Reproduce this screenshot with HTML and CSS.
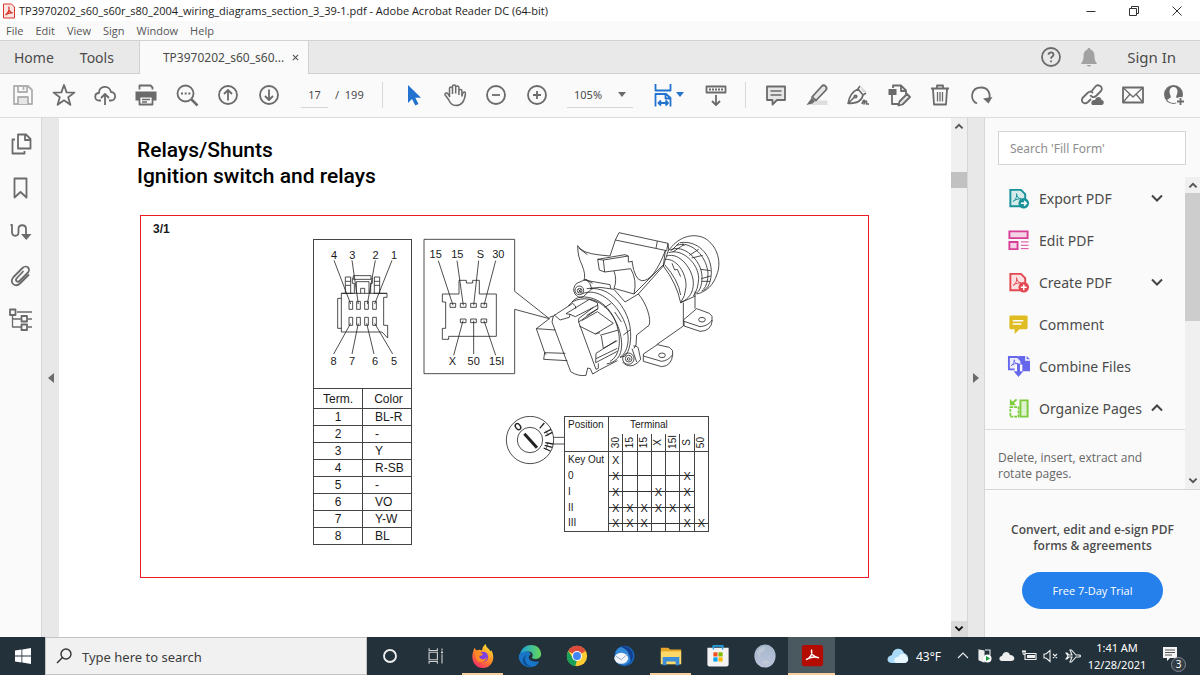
FILE: index.html
```html
<!DOCTYPE html>
<html lang="en">
<head>
<meta charset="utf-8">
<title>TP3970202_s60_s60r_s80_2004_wiring_diagrams_section_3_39-1.pdf - Adobe Acrobat Reader DC (64-bit)</title>
<link rel="stylesheet" href="styles.css">
</head>
<body>
<div class="app">
  <header class="titlebar">
    <svg class="app-icon" viewBox="0 0 14 16"><path d="M1.500 1h8l3 3v11h-11z" fill="#fbe4e2" stroke="#d9352c"/><path d="M3.500 12c3-2 4-5 3.300-8.500C6.500 7 8 9.500 10.800 10c-3-.4-5.500.5-7.300 2z" fill="none" stroke="#d9352c" stroke-width="1.200"/></svg>
    <span class="window-title">TP3970202_s60_s60r_s80_2004_wiring_diagrams_section_3_39-1.pdf - Adobe Acrobat Reader DC (64-bit)</span>
    <div class="window-controls">
      <button aria-label="Minimize"><svg viewBox="0 0 12 12"><path d="M1.500 6.500h9"/></svg></button>
      <button aria-label="Restore"><svg viewBox="0 0 12 12"><path d="M1.500 3.500h7v7h-7zM3.500 3.500v-2h7v7h-2"/></svg></button>
      <button aria-label="Close"><svg viewBox="0 0 12 12"><path d="M1.500 1.500l9 9M10.500 1.500l-9 9"/></svg></button>
    </div>
  </header>
  <nav class="menubar">
    <button>File</button><button>Edit</button><button>View</button><button>Sign</button><button>Window</button><button>Help</button>
  </nav>
  <div class="tabbar">
    <button class="tab">Home</button>
    <button class="tab">Tools</button>
    <div class="tab-active"><span>TP3970202_s60_s60...</span><button aria-label="Close tab"><svg viewBox="0 0 8 8"><path d="M1 1l6 6M7 1L1 7"/></svg></button></div>
    <div class="account">
      <button aria-label="Help"><svg class="ic" viewBox="0 0 24 24"><circle cx="12" cy="12" r="9"/><path d="M9.500 9.800c0-3.300 5-3.200 5 0 0 1.900-2.500 1.700-2.500 4M12 15.500v1.800"/></svg></button>
      <button aria-label="Notifications"><svg class="ic" viewBox="0 0 24 24"><path d="M12 3c1 0 1.500.7 1.500 1.500 3 1 4 3.500 4 6.500 0 4 .8 5.500 2.200 7v1H4.300v-1c1.400-1.500 2.200-3 2.200-7 0-3 1-5.500 4-6.500C10.500 3.700 11 3 12 3zM10 20h4c0 2-4 2-4 0z" fill="#a2a2a2" stroke="none"/></svg></button>
      <button class="sign-in">Sign In</button>
    </div>
  </div>
  <div class="toolbar">
    <div class="group">
      <button aria-label="Save"><svg class="ic pale" viewBox="0 0 24 24"><path d="M3 3h14l4 4v14H3zM7 3v6h9V3M12.500 4v3"/><path d="M7 21v-7h10v7" fill="#e6e6e6"/></svg></button>
      <button aria-label="Star"><svg class="ic" viewBox="0 0 24 24"><path d="M12 2l2.600 7.400 7.800.2-6.200 4.700 2.200 7.500L12 17.300l-6.400 4.500 2.200-7.500L1.600 9.600l7.800-.2z"/></svg></button>
      <button aria-label="Upload"><svg class="ic" viewBox="0 0 24 24"><path d="M8 17.500H6c-5 0-5-7.500 0-7.500 0-8 10.500-8 12-1 5.500 0 5.500 8.500 0 8.500h-2M12 22V11.500M8 15l4-4 4 4"/></svg></button>
      <button aria-label="Print"><svg class="ic" viewBox="0 0 24 24"><path d="M1.500 8.500h21v9h-3.500v-3h-14v3h-3.500z" fill="#6b6b6b" stroke="none"/><path d="M5.500 6.500V2.500h11l2 2v2M5.500 13.500h13v8h-13z" fill="#fafafa"/><path d="M8 16.500h8M8 19h5" stroke-width="1.500"/></svg></button>
      <button aria-label="Search"><svg class="ic" viewBox="0 0 24 24"><circle cx="10.500" cy="10.500" r="8"/><path d="M16.500 16.500l6 6" stroke-width="2.500"/><path d="M6 10.500h2M9.700 10.500h2M13.400 10.500h2"/></svg></button>
      <button aria-label="Previous page"><svg class="ic" viewBox="0 0 24 24"><circle cx="12" cy="12" r="9"/><path d="M12 17.500V7M8 11l4-4 4 4"/></svg></button>
      <button aria-label="Next page"><svg class="ic" viewBox="0 0 24 24"><circle cx="12" cy="12" r="9"/><path d="M12 6.500V17M8 13l4 4 4-4"/></svg></button>
    </div>
    <label class="page-field"><input aria-label="Page number" value="17"><span>/&nbsp; 199</span></label>
    <div class="divider"></div>
    <div class="group">
      <button aria-label="Select"><svg class="ic" viewBox="0 0 24 24"><path d="M6 2v18l4-4 3.300 6.500 3.200-1.500-3.200-6.200H19z" fill="#2273cf" stroke="none"/></svg></button>
      <button aria-label="Hand"><svg class="ic" viewBox="0 0 24 24"><path d="M6.500 14V5.500c0-2 3-2 3 0V11M9.500 10.500v-7c0-2 3.200-2 3.200 0v7M12.700 10.500v-6c0-2 3.200-2 3.200 0V12M15.900 8c0-2 3-2 3 0v5l1-3c.8-1.800 3-1 2.500.8-.7 6-3.200 11.700-9.400 11.700-4 0-6-2.500-7.500-6L2 11.800c-.5-2 2-2.500 3-1l2 3.200" stroke-width="1.500"/></svg></button>
      <button aria-label="Zoom out"><svg class="ic" viewBox="0 0 24 24"><circle cx="12" cy="12" r="9"/><path d="M8 12h8"/></svg></button>
      <button aria-label="Zoom in"><svg class="ic" viewBox="0 0 24 24"><circle cx="12" cy="12" r="9"/><path d="M8 12h8M12 8v8"/></svg></button>
    </div>
    <div class="zoom-field"><select aria-label="Zoom level"><option>105%</option></select><svg class="caret" viewBox="0 0 8 5"><path d="M0 0h8L4 5z"/></svg></div>
    <button class="fit" aria-label="Fit page"><svg class="ic blue" viewBox="0 0 24 24"><path d="M4.500 1v6.500h15V1M4.500 23.500V11H15l4.500 4v8.500M14.500 11v4.500H19M8 20h8.500M10 17.500L7.500 20l2.500 2.500M14.500 17.500L17 20l-2.500 2.500"/></svg><svg class="caret blue-fill" viewBox="0 0 8 5"><path d="M0 0h8L4 5z"/></svg></button>
    <button class="scroll-mode" aria-label="Scrolling"><svg class="ic" viewBox="0 0 24 24"><path d="M2.500 3.500h19v6h-19zM12 12v9.500M8 18l4 4 4-4"/><path d="M5 6.500h14" stroke-dasharray="2 1"/></svg></button>
    <div class="divider"></div>
    <div class="group">
      <button aria-label="Comment"><svg class="ic" viewBox="0 0 24 24"><path d="M3 3.500h18V17h-8l-4.500 4.500V17H3z" fill="#e6e6e6"/><path d="M6.500 8h11M6.500 12h11" stroke-width="1.500"/></svg></button>
      <button aria-label="Highlight"><svg class="ic" viewBox="0 0 24 24"><path d="M9 17.500h13.500V22H4z" fill="#dedede" stroke="none"/><path d="M7 14L17 3c2-2 6 1 4 4L11 17.500z" fill="#e6e6e6"/><path d="M6.500 15l3.500 3-2.500 2.500-6 1.500z" fill="#6b6b6b" stroke="none"/></svg></button>
      <button aria-label="Sign"><svg class="ic" viewBox="0 0 24 24"><path d="M2 20.500C3 14 5.500 9 12 6l5 6c-1 6-6 8.500-15 8.500zM2 20.500l7-7M12 6l2-3M17 12l3-2M16 21c2-6 3-4 2 0 2-5 3-3 2.500 0h2.500" stroke-width="1.600"/><circle cx="9.500" cy="13.500" r="1.200"/><path d="M14 2l7 7h-5z" fill="#ddd" stroke="none"/></svg></button>
      <button aria-label="Edit"><svg class="ic" viewBox="0 0 24 24"><path d="M6 5V2.500h8l5 5V11M14 3v5h5M5 12v9h6"/><path d="M1.500 6h8v6h-8z" fill="#6b6b6b" stroke="none"/><path d="M11.500 22.500l1-4L20 11l3 3-7.500 7.500z" fill="#e6e6e6"/></svg></button>
      <button aria-label="Delete"><svg class="ic" viewBox="0 0 24 24"><path d="M3 5.500h18M9 5V2.500h6V5M5 6l1 15.500h12L19 6"/><path d="M9.500 9v9.500M12 9v9.500M14.500 9v9.500" stroke-width="1.300"/></svg></button>
      <button aria-label="Rotate"><svg class="ic" viewBox="0 0 24 24"><path d="M8 20.500C0 17 2 4.500 12 4.500c7 0 10 6 8 12"/><path d="M23.500 14l-4 6.500-5.500-5z" fill="#6b6b6b" stroke="none"/></svg></button>
    </div>
    <div class="group group-end">
      <button aria-label="Share link"><svg class="ic" viewBox="0 0 24 24"><path d="M11 9l4-5c3-4 9 0 6 4l-5 5c-2 2-5 1-5.500-1M13 10c-2-2-4-1.500-5.500 0l-5 5c-2 4 2 7 5.500 4l3-3"/><path d="M12 22c-2-3 .5-5.500 3-5 1-4 6-4 6.500 0 3 0 3 5 0 5z" fill="#6b6b6b" stroke="none"/></svg></button>
      <button aria-label="Email"><svg class="ic" viewBox="0 0 24 24"><path d="M2 4.500h20v15H2z"/><path d="M2 4.500L12 14 22 4.500M2 19.500L9 11M22 19.500L15 11" stroke-width="1.300"/></svg></button>
      <button aria-label="Add people"><svg class="ic" viewBox="0 0 24 24"><circle cx="11.500" cy="11.500" r="9.500" fill="#6b6b6b" stroke="none"/><path d="M11.500 4c-4 0-5 4.500-3 8.500.5 1 .5 2-.5 2.500l-3 2c3.500 4 9.500 4 13 0l-3-2c-1-.5-1-1.500-.5-2.500 2-4 1-8.500-3-8.500z" fill="#fafafa" stroke="none"/><circle cx="18.500" cy="18.500" r="4.500" fill="#fafafa" stroke="none"/><path d="M18.500 15v7M15 18.500h7"/></svg></button>
    </div>
  </div>

  <main class="workspace">
    <nav class="rail">
      <button aria-label="Page thumbnails"><svg class="ic" viewBox="0 0 24 24"><path d="M9 2.500h8l4.500 4.500v9.500H9zM16 3v5h5M6 7.500H3.500v14h12v-2.500"/></svg></button>
      <button aria-label="Bookmarks"><svg class="ic" viewBox="0 0 24 24"><path d="M5.500 2.500h12v19l-6-5.500-6 5.500z"/></svg></button>
      <button aria-label="Destinations"><svg class="ic" viewBox="0 0 24 24"><path d="M1.500 5h1.500v7c0 5 6.500 5 6.500 0V9c0-5 7.500-5 7.500 0v6"/><path d="M12 14h10.500l-5.200 6z" fill="#6b6b6b" stroke="none"/></svg></button>
      <button aria-label="Attachments"><svg class="ic" viewBox="0 0 24 24"><path d="M14.500 7l-7 7.500c-1.500 2 1 4.500 3 2.500L18.500 9c4-4-1-9-5-5L4.500 13c-5 6 2 11 7 6l8.500-8.500"/></svg></button>
      <button aria-label="Model tree"><svg class="ic" viewBox="0 0 24 24"><path d="M8 4h15M19 11h4M19 19h4M3.500 7v12h9M3.500 11h9" stroke-width="1.300"/><path d="M1 1.500h5.500V7H1zM12.500 8H18v5.500h-5.500zM12.500 16.500H18V22h-5.500z"/></svg></button>
    </nav>
    <button class="gutter gutter-left" aria-label="Show navigation pane"><svg viewBox="0 0 6 10"><path d="M6 0v10L0 5z"/></svg></button>

    <article class="document">
      <h1>Relays/Shunts<br>Ignition switch and relays</h1>
      <section class="figure">
        <h2>3/1</h2>
        <div class="pinout">
          <svg class="drawing connector" viewBox="42 30 291 444">
            <g>
              <path d="M124 190V306M124 190H160M220 190H261V202H251V286H263V324L246 306H124M124 205H113V295H124M136 190V141H152V190M136 154H152M136 166H152M223 190V141H239V190M223 154H239M223 166H239M160 148V137H213V148H160M157 143V160H163V190M217 143V160H212V190M169 190V155H207V190M182 190V175H194V190M124 190H261"/>
              <path d="M147 214h11v24h-11zM170 214h11v24h-11zM194 214h11v24h-11zM218 214h11v24h-11zM147 262h11v24h-11zM170 262h11v24h-11zM194 262h11v24h-11zM218 262h11v24h-11z"/>
              <path d="M102 91L152 222M156 91L175 222M226 91L202 222M276 91L224 222M101 372L152 280M156 372L175 280M222 372L200 280M278 372L224 280"/>
            </g>
            <text x="102" y="86">4</text><text x="157" y="86">3</text><text x="227" y="86">2</text><text x="282" y="86">1</text>
            <text x="101" y="406">8</text><text x="156" y="406">7</text><text x="225" y="406">6</text><text x="282" y="406">5</text>
          </svg>
          <table class="colors">
            <thead><tr><th>Term.</th><th>Color</th></tr></thead>
            <tbody>
              <tr><td>1</td><td>BL-R</td></tr><tr><td>2</td><td>-</td></tr><tr><td>3</td><td>Y</td></tr><tr><td>4</td><td>R-SB</td></tr>
              <tr><td>5</td><td>-</td></tr><tr><td>6</td><td>VO</td></tr><tr><td>7</td><td>Y-W</td></tr><tr><td>8</td><td>BL</td></tr>
            </tbody>
          </table>
        </div>
        <div class="switch">
          <svg class="drawing" viewBox="-261 30 903 450">
            <g>
              <path d="M118 296L14 214V58H-258V461H14V268L118 296"/>
              <g transform="translate(-630 30)">
                <path d="M427 192H477V151H499V159H518V151H538V192H589V319H446V328H427V295H437V216H427Z"/>
                <path d="M450 220h17v12h-17zM481 220h17v12h-17zM512 220h17v12h-17zM543 220h17v12h-17zM481 267h17v11h-17zM512 267h17v11h-17zM543 267h17v11h-17z"/>
                <path d="M415 92L459 226M471 92L490 226M536 92L521 226M587 92L552 226M461 376L489 272M521 372V272M587 376L552 272"/>
              </g>
              <path d="M118 296L79 326L104 398L101 418L172 422M79 326L136 330M104 398L166 400M104 398L108 404M118 292L130 288M130 288L126 306L182 455Q205 470 228 466L233 444L241 446L248 462L268 450M130 288L188 250Q200 258 197 266M132 284L150 300L178 292L180 283L168 281M180 283L196 290L264 255M168 281L238 238L262 248L264 266L206 306V296L250 262M206 306L258 448L265 445V430M208 318L256 342L310 310M215 302L262 275L310 310M230 286L264 266M256 342L270 338M274 348L280 385L322 362M270 346L325 330M258 400L318 362M258 400L257 428L322 394M258 416L322 385M268 450L322 422"/>
              <path d="M175 258C190 235 230 230 262 245C310 270 335 330 335 375C334 410 320 425 290 432M186 246C200 228 225 228 250 236C306 256 330 320 328 370C326 400 315 415 300 424M215 222C260 200 320 245 345 310C365 360 350 400 330 412M240 206C300 200 350 260 360 320C366 360 358 395 345 408M284 262L304 250M314 276L334 306M340 345L360 330M330 412L345 408"/>
              <path d="M230 206L270 202L312 208L345 246L385 222C410 250 425 300 417 316L380 345L378 375L372 385M385 222L460 138Q500 190 512 248M464 134Q505 180 512 225M520 248V318L440 374M555 214V266"/>
              <path d="M248 190L228 178L200 190Q185 205 195 222Q205 236 220 230L248 204M228 178Q242 188 246 208"/><circle cx="208" cy="211" r="13"/><circle cx="209" cy="212" r="7"/><path d="M205 208l8 8M213 207l-7 10"/>
              <circle cx="355" cy="416" r="17"/><circle cx="356" cy="416" r="10"/><circle cx="356" cy="417" r="4"/><path d="M370 378Q385 376 386 390L392 418Q385 430 370 436Q350 442 338 426M366 386L380 426"/>
              <path d="M400 402L442 374L478 382Q492 390 488 404Q475 422 455 424L400 408ZM400 408V424L455 440Q485 438 488 404"/><ellipse cx="456" cy="406" rx="10" ry="7"/>
              <path d="M520 300L560 266L598 280Q610 288 606 300Q595 318 570 320L522 304ZM522 304V318L570 334Q604 334 607 300"/><ellipse cx="576" cy="299" rx="10" ry="7"/>
              <path d="M327 38L474 70L470 92L316 60ZM442 63L438 85M316 60L300 108M474 70L476 88L460 138L466 92M366 124Q374 180 395 182Q430 185 466 92"/>
              <path d="M203 77Q203 110 216 135Q228 165 222 180L300 194L302 206M203 77Q215 100 270 105L300 108M206 84L232 104M263 118L268 150L284 156L280 120ZM263 118L345 104L355 108L280 120M284 156L362 146M355 108V126L368 124M312 153Q322 180 312 205L372 222L460 134M362 146Q382 180 372 222"/>
              <path d="M476 92C500 55 545 35 585 55C625 80 635 130 620 165C610 195 590 215 560 222M510 68C560 60 605 100 604 160C602 195 590 210 575 212M516 72C558 76 590 115 594 160Q594 195 580 208M480 90C520 70 575 120 576 170C576 200 568 215 558 220M476 98C516 84 566 130 566 176Q564 210 550 228M470 108C510 95 550 150 550 190C550 215 540 235 512 248M466 118C500 115 530 160 528 200Q526 230 512 248M484 92L508 68M488 96L522 74M538 106L566 88M545 114L578 106M572 148L602 152M576 184L600 184M574 176L602 168M486 130L494 150L502 148L512 170M500 76Q515 70 524 76M512 248L556 228"/>
            </g>
            <g transform="translate(-630 30)">
              <text x="407" y="84">15</text><text x="472" y="84">15</text><text x="541" y="84">S</text><text x="595" y="84">30</text>
              <text x="457" y="405">X</text><text x="521" y="405">50</text><text x="590" y="405">15I</text>
            </g>
          </svg>
          <div class="positions-row">
            <svg class="drawing dial" viewBox="30 33 177 147">
              <g><circle cx="105" cy="105" r="71"/><circle cx="105" cy="105" r="38"/><path d="M176 97H207M174 117H207"/></g>
              <path d="M88 86L126 128" stroke-width="9"/><path d="M134 70L148 54M147 84L168 73M151 93L172 82M151 113L174 117M149 121L172 127M146 129L166 138" stroke-width="4"/><path d="M153 77L159 92M159 111L153 134" stroke-width="2"/>
              <ellipse cx="69" cy="65" rx="7" ry="10" transform="rotate(-38 69 65)" stroke-width="4"/>
            </svg>
            <table class="positions">
              <thead>
                <tr class="head"><th rowspan="2">Position</th><th colspan="7">Terminal</th></tr>
                <tr class="terms"><th><span>30</span></th><th><span>15</span></th><th><span>15</span></th><th><span>X</span></th><th><span>15I</span></th><th><span>S</span></th><th><span>50</span></th></tr>
              </thead>
              <tbody>
                <tr><th>Key Out</th><td>X</td><td></td><td></td><td></td><td></td><td></td><td></td></tr>
                <tr><th>0</th><td class="run">X</td><td class="run"></td><td class="run"></td><td class="run"></td><td class="run"></td><td class="run">X</td><td></td></tr>
                <tr><th>I</th><td class="run">X</td><td class="run"></td><td class="run"></td><td class="run">X</td><td class="run"></td><td class="run">X</td><td></td></tr>
                <tr><th>II</th><td class="run">X</td><td class="run">X</td><td class="run">X</td><td class="run">X</td><td class="run">X</td><td class="run">X</td><td></td></tr>
                <tr><th>III</th><td class="run">X</td><td class="run">X</td><td class="run">X</td><td class="run"></td><td class="run"></td><td class="run">X</td><td class="run">X</td></tr>
              </tbody>
            </table>
          </div>
        </div>
      </section>
    </article>
    <div class="scrollbar doc-scroll">
      <svg class="chev" viewBox="0 0 10 10"><path d="M2 7l3-3 3 3"/></svg>
      <div class="thumb"></div>
      <svg class="chev chev-dark" viewBox="0 0 10 10"><path d="M2 3l3 3 3-3"/></svg>
    </div>
    <button class="gutter gutter-right" aria-label="Hide tools pane"><svg viewBox="0 0 6 10"><path d="M0 0v10l6-5z"/></svg></button>

    <aside class="tools">
      <input class="tool-search" type="search" aria-label="Search tools" placeholder="Search 'Fill Form'">
      <div class="tool-scroll">
        <div class="tool-list">
          <button class="tool"><svg class="ticon" viewBox="0 0 24 24"><path d="M3.500 3h11l4.500 4.500V20H3.500z" fill="#d5eaeb" stroke="#179299" stroke-width="2"/><path d="M6.500 15c3-2 4-5 3.500-8 0 3 2 5 5 5.500-3-.5-6 .5-8.500 2.500z" fill="none" stroke="#179299"/><circle cx="17.500" cy="17" r="5.500" fill="#179299"/><path d="M14.500 17h5.500M17.800 14.500l2.500 2.500-2.500 2.500" fill="none" stroke="#fff" stroke-width="1.500"/></svg><span>Export PDF</span><svg class="chevron" viewBox="0 0 12 12"><path d="M1 3.500l5 5 5-5"/></svg></button>
          <button class="tool"><svg class="ticon" viewBox="0 0 24 24"><path d="M2.500 2.500h19v7h-19zM2.500 13.500h8.500v7.500H2.500z" fill="#f5d3e6" stroke="#d83f96" stroke-width="2"/><path d="M14.500 13.500h8M14.500 17h8M14.500 20.500h8" stroke="#d83f96"/></svg><span>Edit PDF</span></button>
          <button class="tool"><svg class="ticon" viewBox="0 0 24 24"><path d="M3.500 3h11l4.500 4.500V20H3.500z" fill="#fbdfe1" stroke="#e34850" stroke-width="2"/><path d="M6.500 15c3-2 4-5 3.500-8 0 3 2 5 5 5.500-3-.5-6 .5-8.500 2.500z" fill="none" stroke="#e34850"/><circle cx="17.500" cy="17" r="5.500" fill="#e34850"/><path d="M14.500 17h6M17.500 14v6" fill="none" stroke="#fff" stroke-width="1.500"/></svg><span>Create PDF</span><svg class="chevron" viewBox="0 0 12 12"><path d="M1 3.500l5 5 5-5"/></svg></button>
          <button class="tool"><svg class="ticon" viewBox="0 0 24 24"><path d="M4 2.500h16q1.500 0 1.500 1.500v11.500q0 1.500-1.500 1.500h-7l-5 5v-5H4q-1.500 0-1.500-1.500V4q0-1.500 1.500-1.500z" fill="#dfbd22"/><path d="M6 8h11M6 11.500h9" stroke="#fff" stroke-width="1.500"/></svg><span>Comment</span></button>
          <button class="tool"><svg class="ticon" viewBox="0 0 24 24"><path d="M12 1h7v5h5v11H12z" fill="#6767ec"/><path d="M20.500 1l3.500 3.500h-3.500z" fill="#6767ec"/><path d="M2 2h9l4 4v9H2z" fill="#ececfd" stroke="#6767ec" stroke-width="2"/><path d="M4.500 11c3-2 3-4 3-6 0 3 2 4 4 4-3 0-5 .5-7 2z" fill="none" stroke="#6767ec"/><path d="M8 10h8v8H8z" fill="#fafafa"/><path d="M12 9v9" stroke="#6767ec" stroke-width="3"/><path d="M7 17h10l-5 6z" fill="#6767ec"/></svg><span>Combine Files</span></button>
          <button class="tool"><svg class="ticon" viewBox="0 0 24 24"><path d="M14 3.500h7.500v17H14z" fill="#dff2cf" stroke="#7bcb3a" stroke-width="2"/><path d="M3.500 10.500H12v10H3.500z" fill="none" stroke="#7bcb3a" stroke-width="1.800" stroke-dasharray="3 1"/><path d="M10 2.500L6 6" stroke="#7bcb3a" stroke-width="2"/><path d="M3 2v6.500h6.500z" fill="#7bcb3a"/></svg><span>Organize Pages</span><svg class="chevron" viewBox="0 0 12 12"><path d="M1 8.500l5-5 5 5"/></svg></button>
          <p class="tool-note">Delete, insert, extract and rotate pages.</p>
        </div>
        <div class="scrollbar tool-bar">
          <svg class="chev" viewBox="0 0 10 10"><path d="M2 7l3-3 3 3"/></svg>
          <div class="thumb"></div>
          <svg class="chev" viewBox="0 0 10 10"><path d="M2 3l3 3 3-3"/></svg>
        </div>
      </div>
      <div class="promo">
        <p>Convert, edit and e-sign PDF forms &amp; agreements</p>
        <button>Free 7-Day Trial</button>
      </div>
    </aside>
  </main>

  <footer class="taskbar">
    <button class="start" aria-label="Start"><svg viewBox="0 0 16 16"><path d="M0 2.500L6.500 1.600v6H0zM7.300 1.500L16 0v7.600H7.300zM0 8.400h6.500v6L0 13.500zM7.300 8.400H16V16l-8.700-1.500z" fill="#fff"/></svg></button>
    <label class="search"><svg viewBox="0 0 16 16"><circle cx="10" cy="6" r="5"/><path d="M6.500 9.500L1 15"/></svg><input placeholder="Type here to search" aria-label="Type here to search"></label>
    <div class="task-icons">
      <button aria-label="Cortana"><svg viewBox="0 0 26 26"><circle cx="13" cy="13" r="6.500" fill="none" stroke="#eee" stroke-width="2"/></svg></button>
      <button aria-label="Task view"><svg viewBox="0 0 26 26"><path d="M5.500 9h9v8h-9zM5.500 4.500v2.500h9V4.500M5.500 21.500V19h9v2.500M19.500 5v2M19.500 11v10" fill="none" stroke="#ccc" stroke-width="1.200"/><path d="M18.500 8h2v2h-2z" fill="#eee"/></svg></button>
      <button class="open" aria-label="Firefox"><svg viewBox="0 0 26 26"><defs><linearGradient id="fx" x1=".8" y1="0" x2=".2" y2="1"><stop offset="0" stop-color="#ffe83a"/><stop offset=".5" stop-color="#ff8b26"/><stop offset="1" stop-color="#f4236c"/></linearGradient></defs><path d="M1.500 14C1.500 9 3 7 3.500 4L6 7c2-1 4-1 6 0 0-2 1-5 4-7 0 4 4 5 5 8 1-1 1-1 .5-2 6 9 1 20-8.500 20C5.500 26 1.500 20 1.500 14z" fill="url(#fx)"/><circle cx="13" cy="14" r="5.500" fill="#7b3fe4"/><path d="M5 9c3-2 6 0 8 2-1 2-3 2-4 2 0 4 6 5 8 1 0 7-12 8-12-1z" fill="#ff8a25"/></svg></button>
      <button aria-label="Edge"><svg viewBox="0 0 26 26"><defs><linearGradient id="ed" x2="1" y2="0"><stop offset="0" stop-color="#1b9de2"/><stop offset="1" stop-color="#65d957"/></linearGradient></defs><path d="M2 12C4-3 25-2 25 11c0 6-9 6-10 4 2-3 1-7-4-7-4 0-7 2-9 4z" fill="url(#ed)"/><path d="M1 12c3-5 12-5 13-1-4 2-4 9 9 8-4 7-10 7-15 5-5-2-8-8-7-12z" fill="#1976c8"/><path d="M10 11c-5 5-2 13 7 13-13 2-15-9-7-13z" fill="#0d4f94"/></svg></button>
      <button aria-label="Chrome"><svg viewBox="0 0 26 26"><circle cx="13" cy="13" r="11" fill="#fc3"/><path d="M13 13L3.500 7.500c4.400-7.600 14.700-7.200 19 0z" fill="#dd4b3d"/><path d="M3.500 7.500L9 16l4 2-2 6C2.500 22.500 0 14 3.500 7.500z" fill="#19a05a"/><circle cx="13" cy="13" r="5.500" fill="#fff"/><circle cx="13" cy="13" r="4.300" fill="#4285f4"/></svg></button>
      <button aria-label="Thunderbird"><svg viewBox="0 0 26 26"><circle cx="13.500" cy="13" r="11" fill="#1963b8"/><path d="M4 8C7 2 15 2 18 6l-1 3 3 8c-2 7-13 7-16 1z" fill="#3388d8"/><ellipse cx="10" cy="15.500" rx="7.500" ry="6" fill="#f2f5fa"/><path d="M4 13l6 4 7-6" fill="none" stroke="#8aa9c9"/><path d="M9 3c10-3 18 8 11 17 1-7-2-14-11-17z" fill="#123f8f"/></svg></button>
      <button class="open" aria-label="File Explorer"><svg viewBox="0 0 26 26"><path d="M2 4h8l2 2h12v15H2z" fill="#e7a82a"/><path d="M2 8h22v14H2z" fill="#fed869"/><path d="M4 14h18v9h-4v-4H8v4H4z" fill="#3c8ed9"/></svg></button>
      <button aria-label="Microsoft Store"><svg viewBox="0 0 26 26"><path d="M8 6V2h10v4" fill="none" stroke="#24a5e8" stroke-width="1.500"/><path d="M1.500 4h23v18q0 2.500-2.500 2.500H4Q1.500 24.500 1.500 22z" fill="#f3f3f3"/><path d="M8 2h10v4M8 2v4" fill="none" stroke="#24a5e8" stroke-width="1.500"/><path d="M8 9h4.500v4.500H8z" fill="#f25022"/><path d="M13.500 9H18v4.500h-4.500z" fill="#7fba00"/><path d="M8 14.500h4.500V19H8z" fill="#00a4ef"/><path d="M13.500 14.500H18V19h-4.500z" fill="#ffb900"/></svg></button>
      <button aria-label="Moon"><svg viewBox="0 0 26 26"><defs><linearGradient id="mn" x2="0" y2="1"><stop offset="0" stop-color="#a4b6ca"/><stop offset="1" stop-color="#bdc4dc"/></linearGradient></defs><ellipse cx="13" cy="13" rx="11.500" ry="12.500" fill="url(#mn)"/><path d="M4 9q4-7 10-6l-2 5-4 2-1 5zM9 20l5-3 4 2-3 4z" fill="#cbd3dc" opacity=".5"/></svg></button>
      <button class="open current" aria-label="Acrobat"><svg viewBox="0 0 26 26"><rect x="2" y="1" width="23" height="23" rx="3" fill="#b30b00"/><path d="M6.500 17c5-2 7-6 6-11-1 5 2 8 8 9-6-2-11 0-14 2z" fill="none" stroke="#fff" stroke-width="1.500"/></svg></button>
    </div>
    <div class="tray">
      <svg class="weather" viewBox="0 0 22 18"><path d="M5 16c-6 0-6-7 0-8 1-8 10-8 12-2 6 2 5 10 0 10z" fill="#a9dbf8"/><path d="M9 16c-3-1-2-6 2-6 3-5 8-3 8-1 4 3 2 7-2 7z" fill="#e8f6ff"/></svg>
      <span class="temp">43°F</span>
      <svg class="tray-icon" viewBox="0 0 16 16"><path d="M3 10l5-5 5 5"/></svg>
      <svg class="tray-icon" viewBox="0 0 16 16"><path d="M2 2l5 1v11l-5-2z" fill="#eee"/><path d="M8 2h5v5"/><circle cx="10.500" cy="10.500" r="4" fill="#fff" stroke="none"/><path d="M9 8l4 2.500L9 13z" fill="#169a3a" stroke="none"/></svg>
      <svg class="tray-icon" viewBox="0 0 16 16"><path d="M3 13c-4 0-3-5 0-5 1-5 7-5 8-1 5 0 6 6 1 6z" fill="#eee" stroke="none"/></svg>
      <svg class="tray-icon" viewBox="0 0 16 16"><path d="M4 5.500h11v6H4zM1 3.500h4M2 2v3c0 2 2 2 2 0V2"/><path d="M6 7h8v3H6z" fill="#eee" stroke="none"/></svg>
      <svg class="tray-icon" viewBox="0 0 16 16"><path d="M1 6h2l4-3.500v11L3 10H1zM10 6l4 4M14 6l-4 4"/></svg>
      <svg class="tray-icon" viewBox="0 0 16 16"><path d="M1 5l2 3-2 3h1l2-2h3l-2 5h1.500L11 9h3c2 0 2-2 0-2h-3L6.500 2H5l2 5H4L2 5z"/></svg>
      <div class="clock"><span>1:41 AM</span><span>12/28/2021</span></div>
      <button class="notice" aria-label="Notifications"><svg viewBox="0 0 22 22"><path d="M1 2h14v11H8l-3 3v-3H1z" fill="#f4f4f4"/><path d="M3 5h10M3 7.500h10M3 10h7" stroke="#555"/></svg><span>3</span></button>
    </div>
  </footer>
</div>
</body>
</html>
```

FILE: styles.css
```css
* { box-sizing: border-box; }
body { margin: 0; font-family: "Noto Sans", "Open Sans", sans-serif; color: #4b4b4b; background: #fafafa; }
button { border: 0; padding: 0; margin: 0; background: none; font: inherit; color: inherit; display: flex; align-items: center; justify-content: center; }
input, select { font: inherit; color: inherit; border: 0; border-radius: 0; background: none; padding: 0; margin: 0; min-width: 0; outline: 0; appearance: none; }
svg { display: block; flex: none; }
.app { min-height: 100vh; display: flex; flex-direction: column; }

.ic { width: 24px; height: 24px; fill: none; stroke: #6b6b6b; stroke-width: 1.8; stroke-linejoin: round; }
.ic.pale { stroke: #b0b0b0; }
.ic.blue { stroke: #2273cf; }
.caret { width: 8px; height: 5px; fill: #6b6b6b; }
.caret.blue-fill { fill: #2273cf; }

.titlebar { height: 21px; background: #fff; display: flex; align-items: center; padding-left: 2px; }
.app-icon { width: 14px; height: 16px; }
.window-title { margin-left: 3px; font-family: "Open Sans", sans-serif; font-size: 11px; color: #1c1c1c; white-space: nowrap; }
.window-controls { margin-left: auto; display: flex; padding-right: 2px; }
.window-controls button { width: 43px; height: 21px; }
.window-controls svg { width: 12px; height: 12px; fill: none; stroke: #333; }

.menubar { height: 19px; display: flex; gap: 12px; padding-left: 6px; font-family: "Open Sans", sans-serif; font-size: 11px; color: #555; }

.tabbar { height: 34px; background: #e9e9e9; border-top: 1px solid #d2d2d2; border-bottom: 1px solid #d2d2d2; display: flex; padding-left: 14px; }
.tab { font-size: 14px; margin-right: 26px; }
.tab-active { width: 170px; margin: 0 0 -1px -1px; padding-left: 23px; background: #fafafa; border-left: 1px solid #d2d2d2; border-right: 1px solid #d2d2d2; display: flex; align-items: center; gap: 8px; font-size: 12px; }
.tab-active svg { width: 7px; height: 7px; fill: none; stroke: #555; stroke-width: 1.3; }
.account { margin-left: auto; display: flex; align-items: center; gap: 14px; padding-right: 24px; }
.sign-in { font-size: 15px; margin-left: 12px; }

.toolbar { height: 44px; border-bottom: 1px solid #dcdcdc; display: flex; align-items: center; padding: 0 6px 2px 2px; font-size: 11px; }
.group { display: flex; }
.group button { width: 41px; height: 40px; }
.group-end { margin-left: auto; }
.page-field { display: flex; align-items: center; margin-left: 12px; width: 81px; gap: 7px; }
.page-field input { width: 27px; height: 26px; text-align: center; border-bottom: 1px solid #d6d6d6; }
.divider { width: 1px; height: 26px; background: #d8d8d8; margin-right: 10px; }
.zoom-field { display: flex; align-items: center; width: 66px; height: 26px; margin-left: 10px; padding: 0 7px; border-bottom: 1px solid #d6d6d6; }
.zoom-field select { flex: 1; }
.fit { margin-left: 18px; gap: 1px; }
.scroll-mode { margin: 0 17px 0 20px; }
.scroll-mode + .divider { margin-right: 9px; }

.workspace { flex: 1; display: flex; }
.rail { width: 42px; border-right: 1px solid #d6d6d6; padding-top: 4px; }
.rail button { width: 41px; height: 44px; }
.gutter { background: #e8e8e8; }
.gutter svg { width: 6px; height: 10px; fill: #6b6b6b; }
.gutter-left { width: 17px; }
.gutter-right { width: 18px; border-left: 1px solid #d6d6d6; border-right: 1px solid #d6d6d6; }

.document { flex: 1; background: #fff; padding: 19px 82px 0 81px; color: #1a1a1a; font-family: "Liberation Sans", Arial, sans-serif; }
.document h1 { margin: 0 0 0 -3px; font: 500 21px/26px Roboto, "Liberation Sans", sans-serif; color: #000; }
.figure { margin-top: 26px; min-height: 363px; border: 1px solid #ed1c24; display: flex; padding: 0 0 32px 12px; }
.figure h2 { margin: 6px 0 0; width: 160px; font-size: 12px; line-height: 14px; }
.drawing { fill: none; stroke: #222; stroke-width: 2.4; }
.drawing text { fill: #1a1a1a; stroke: none; font-size: 33px; text-anchor: middle; }
.pinout { margin-top: 23px; width: 99px; }
.connector { width: 99px; height: 149px; border: 1px solid #444; border-bottom: 0; }
table { border-collapse: collapse; table-layout: fixed; }
th { font-weight: 400; padding: 0; }
td { padding: 0; }
.colors { width: 99px; font-size: 12px; line-height: 14px; }
.colors th, .colors td { border: 1px solid #444; height: 17px; text-align: center; }
.colors th { height: 20px; }
.colors th + th { padding-left: 3px; }
.colors tbody td + td { text-align: left; padding-left: 12px; }
.switch { margin: 14px 0 0 11px; }
.switch > .drawing { width: 301px; height: 150px; }
.positions-row { display: flex; margin: 36px 0 0 82px; }
.dial { width: 59px; height: 49px; }
.positions { width: 145px; border: 1px solid #444; font-size: 10px; line-height: 12px; }
.positions thead { border-bottom: 1px solid #444; }
.positions .head th { height: 17px; vertical-align: top; padding-top: 2px; }
.positions .head th:first-child, .positions tbody th { width: 44px; text-align: left; padding-left: 3px; border-right: 1px solid #444; }
.positions .head th:last-child { text-align: left; padding-left: 21px; }
.positions .terms th { height: 18px; border-left: 1px solid #444; }
.terms span { display: block; margin: 0 auto; writing-mode: vertical-rl; transform: rotate(180deg); }
.positions tbody td { height: 16px; font-size: 11px; text-align: center; border-left: 1px solid #444; }
.positions tbody th { white-space: nowrap; }
.positions .run { background: linear-gradient(#333, #333) center / 100% 1px no-repeat; }

.scrollbar { width: 16px; background: #f0f0f0; display: flex; flex-direction: column; }
.chev { width: 16px; height: 16px; padding: 2px; fill: none; stroke: #555; stroke-width: 1.6; }
.chev-dark { margin-top: auto; background: #dadada; stroke: #111; }
.doc-scroll .thumb { margin-top: 38px; height: 16px; background: #c1c1c1; }
.tool-bar .thumb { height: 128px; background: #cdcdcd; margin-bottom: auto; }

.tools { width: 215px; display: flex; flex-direction: column; }
.tool-search { margin: 13px 14px 12px 13px; height: 34px; border: 1px solid #d5d5d5; background: #fff; padding: 0 11px; font-size: 12px; }
.tool-search::placeholder { color: #8e8e8e; opacity: 1; }
.tool-scroll { display: flex; height: 313px; border-bottom: 1px solid #d6d6d6; }
.tool-list { flex: 1; }
.tool { width: 100%; height: 42px; padding: 0 22px; gap: 9px; justify-content: flex-start; font-size: 14px; white-space: nowrap; }
.ticon { width: 23px; height: 23px; }
.chevron { width: 12px; height: 12px; margin-left: auto; fill: none; stroke: #444; stroke-width: 2; }
.tool-note { margin: 0; padding: 20px 30px 0 13px; border-top: 1px solid #dcdcdc; font-family: "Open Sans", sans-serif; font-size: 12px; line-height: 16px; color: #666; }
.promo { padding: 32px 20px 0; text-align: center; font-family: "Open Sans", sans-serif; }
.promo p { margin: 0 0 18px; font-size: 12px; line-height: 16px; font-weight: 600; }
.promo button { width: 141px; height: 37px; margin: 0 auto; border-radius: 19px; background: #2680eb; color: #fff; font-size: 11px; }

.taskbar { height: 38px; background: #22313a; display: flex; color: #fff; }
.start { width: 45px; }
.start svg { width: 16px; height: 16px; }
.search { width: 322px; background: #f1f1f1; border: 1px solid #c4c4c4; display: flex; align-items: center; gap: 10px; padding-left: 10px; color: #333; font-size: 13px; }
.search svg { width: 16px; height: 16px; fill: none; stroke: #333; stroke-width: 1.4; }
.search input { flex: 1; padding-top: 2px; }
.search input::placeholder { color: #3c3c3c; opacity: 1; }
.task-icons { display: flex; }
.task-icons button { width: 47px; padding-top: 2px; border-bottom: 2px solid transparent; }
.task-icons button:first-child { width: 45px; }
.task-icons .open { border-image: linear-gradient(90deg, transparent 10%, #f8cf9c 10%, #f8cf9c 90%, transparent 90%) 2; }
.task-icons .current { background: #4a5860; border-image: none; border-color: #f8cf9c; }
.task-icons svg { width: 24px; height: 24px; }
.tray { margin-left: auto; display: flex; align-items: center; gap: 6px; padding-right: 14px; }
.weather { width: 22px; height: 18px; }
.temp { font-size: 12px; margin: 0 8px 0 1px; }
.tray-icon { width: 16px; height: 16px; fill: none; stroke: #eee; stroke-width: 1.1; }
.clock { width: 60px; font-size: 11px; line-height: 17px; display: flex; flex-direction: column; align-items: center; }
.notice { position: relative; width: 26px; height: 26px; margin-left: 7px; }
.notice svg { width: 22px; height: 22px; }
.notice span { position: absolute; right: 0; bottom: -3px; width: 15px; height: 15px; border: 1px solid #889; border-radius: 50%; background: #333d44; font-size: 10px; line-height: 13px; text-align: center; }
```
